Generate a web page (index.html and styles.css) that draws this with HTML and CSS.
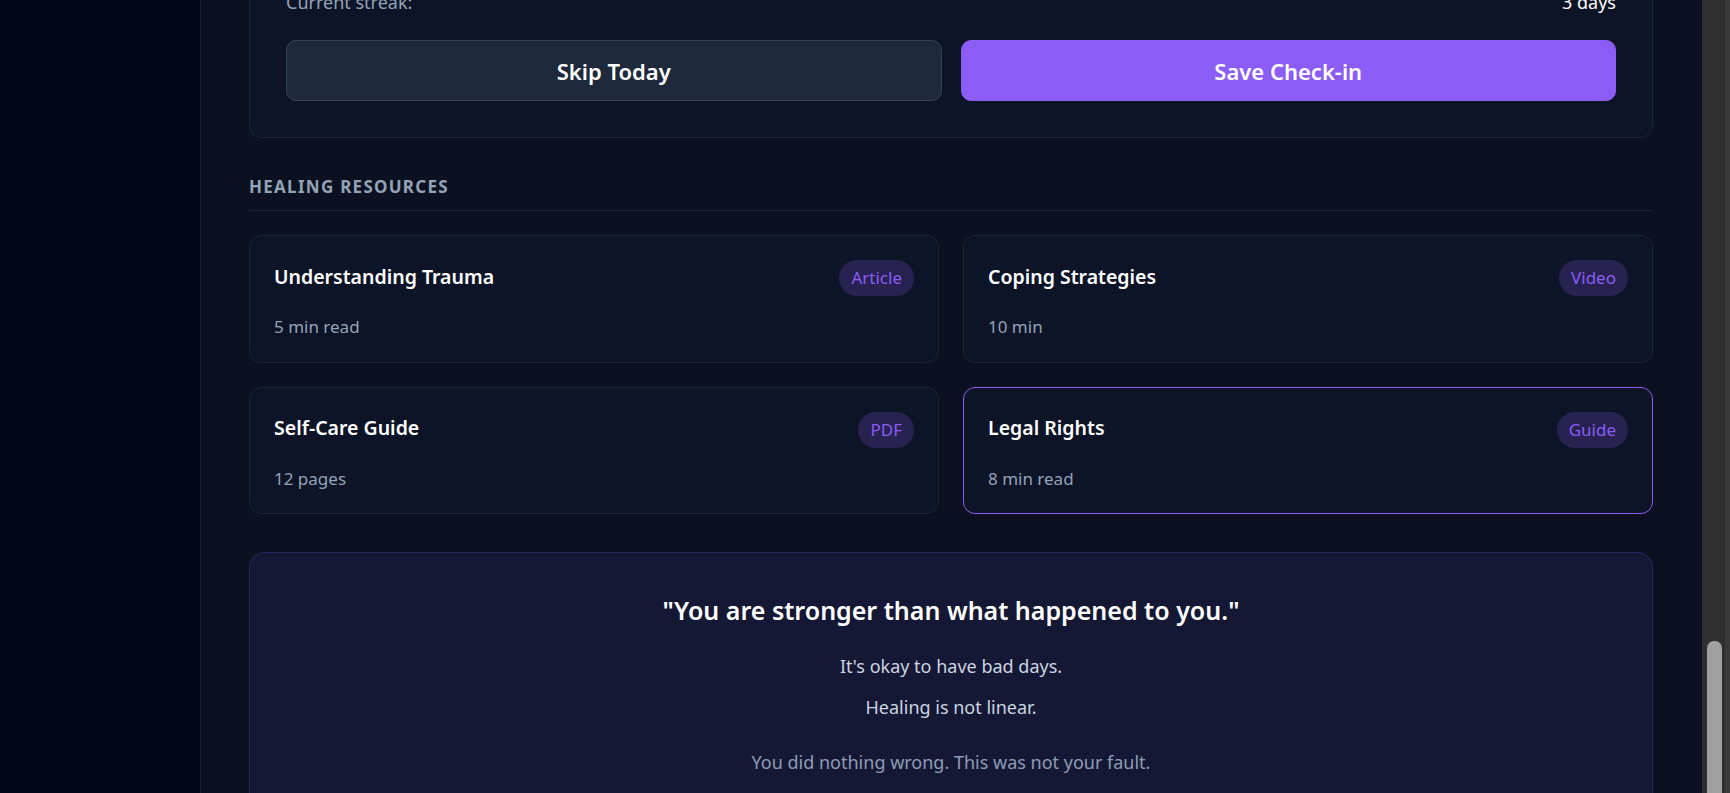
FILE: index.html
```html
<!DOCTYPE html>
<html lang="en">
<head>
<meta charset="utf-8">
<title>Healing Journey</title>
<link rel="stylesheet" href="styles.css">
</head>
<body>
  <aside class="sidebar"></aside>
  <main class="main">
    <section class="card checkin">
      <div class="streak-row">
        <span class="streak-label">Current streak:</span>
        <span class="streak-value">3 days</span>
      </div>
      <div class="actions">
        <button class="btn btn-secondary">Skip Today</button>
        <button class="btn btn-primary">Save Check-in</button>
      </div>
    </section>

    <h2 class="section-title">Healing Resources</h2>

    <div class="resources">
      <article class="card resource">
        <div class="resource-head">
          <h3 class="resource-title">Understanding Trauma</h3>
          <span class="badge">Article</span>
        </div>
        <p class="resource-meta">5 min read</p>
      </article>
      <article class="card resource">
        <div class="resource-head">
          <h3 class="resource-title">Coping Strategies</h3>
          <span class="badge">Video</span>
        </div>
        <p class="resource-meta">10 min</p>
      </article>
      <article class="card resource">
        <div class="resource-head">
          <h3 class="resource-title">Self-Care Guide</h3>
          <span class="badge">PDF</span>
        </div>
        <p class="resource-meta">12 pages</p>
      </article>
      <article class="card resource is-active">
        <div class="resource-head">
          <h3 class="resource-title">Legal Rights</h3>
          <span class="badge">Guide</span>
        </div>
        <p class="resource-meta">8 min read</p>
      </article>
    </div>

    <section class="affirmation">
      <p class="quote">"You are stronger than what happened to you."</p>
      <p class="affirm-line">It's okay to have bad days.</p>
      <p class="affirm-line">Healing is not linear.</p>
      <p class="affirm-note">You did nothing wrong. This was not your fault.</p>
    </section>
  </main>
  <div class="scrollbar">
    <div class="scroll-thumb"></div>
  </div>
</body>
</html>
```

FILE: styles.css
```css
* {
  box-sizing: border-box;
}

html, body {
  height: 100%;
}

body {
  margin: 0;
  display: flex;
  overflow: hidden;
  background: #020617;
  font-family: "Noto Sans", "Open Sans", sans-serif;
  color: #f8fafc;
}

.sidebar {
  flex: 0 0 200px;
  background: #020617;
}

.main {
  flex: 1 1 auto;
  min-width: 0;
  background: #0b1120;
  border-left: 1px solid #172033;
  padding: 0 49px 0 48px;
}

.card {
  background: #0e1427;
  border: 1px solid #1b2437;
  border-radius: 12px;
}

.checkin {
  margin-top: -48px;
  padding: 36px;
}

.streak-row {
  display: flex;
  justify-content: space-between;
  font-size: 18px;
  line-height: 27px;
}

.streak-label {
  color: #94a3b8;
}

.streak-value {
  color: #ffffff;
}

.actions {
  display: flex;
  gap: 19px;
  margin-top: 24px;
}

.btn {
  flex: 1 1 0;
  height: 61px;
  border-radius: 10px;
  font-family: inherit;
  font-size: 22px;
  font-weight: 600;
  color: #ffffff;
  cursor: pointer;
}

.btn-secondary {
  background: #1e293b;
  border: 1px solid #334155;
}

.btn-primary {
  background: #8b5cf6;
  border: 1px solid #8b5cf6;
}

.section-title {
  margin: 37px 0 0;
  padding-bottom: 11px;
  border-bottom: 1px solid #1b2437;
  font-size: 17px;
  line-height: 24px;
  font-weight: 700;
  letter-spacing: 0.075em;
  text-transform: uppercase;
  color: #94a3b8;
}

.resources {
  display: grid;
  grid-template-columns: 1fr 1fr;
  gap: 24px;
  margin-top: 24px;
}

.resource {
  padding: 24px 24px 22px;
}

.resource.is-active {
  border-color: #8b5cf6;
}

.resource-head {
  display: flex;
  align-items: center;
  justify-content: space-between;
  height: 36px;
}

.resource-title {
  margin: -4px 0 0;
  font-size: 19.5px;
  font-weight: 600;
  color: #ffffff;
}

.badge {
  height: 36px;
  padding: 0 12px;
  border-radius: 18px;
  background: rgba(139, 92, 246, 0.2);
  color: #8b5cf6;
  font-size: 17px;
  line-height: 36px;
}

.resource-meta {
  margin: 18px 0 0;
  font-size: 17px;
  line-height: 25.5px;
  color: #94a3b8;
}

.affirmation {
  margin-top: 38px;
  padding: 40px;
  border-radius: 16px;
  border: 1px solid rgba(139, 92, 246, 0.18);
  background: #151834;
  text-align: center;
}

.quote {
  margin: 0 0 24px;
  font-size: 25px;
  line-height: 35px;
  font-weight: 600;
  color: #ffffff;
}

.affirm-line {
  margin: 0 0 12px;
  font-size: 18px;
  line-height: 28.8px;
  color: #cbd5e1;
}

.affirm-note {
  margin: 26px 0 0;
  font-size: 18px;
  line-height: 28.8px;
  color: #8e9cb6;
}

.scrollbar {
  flex: 0 0 28px;
  display: flex;
  flex-direction: column;
  background: #2f2f2f;
  border-right: 5px solid #3a3a3a;
  padding: 641px 3px 0 5px;
}

.scroll-thumb {
  flex: 1 1 auto;
  background: #a1a1a1;
  border-radius: 7px 7px 0 0;
}
```
